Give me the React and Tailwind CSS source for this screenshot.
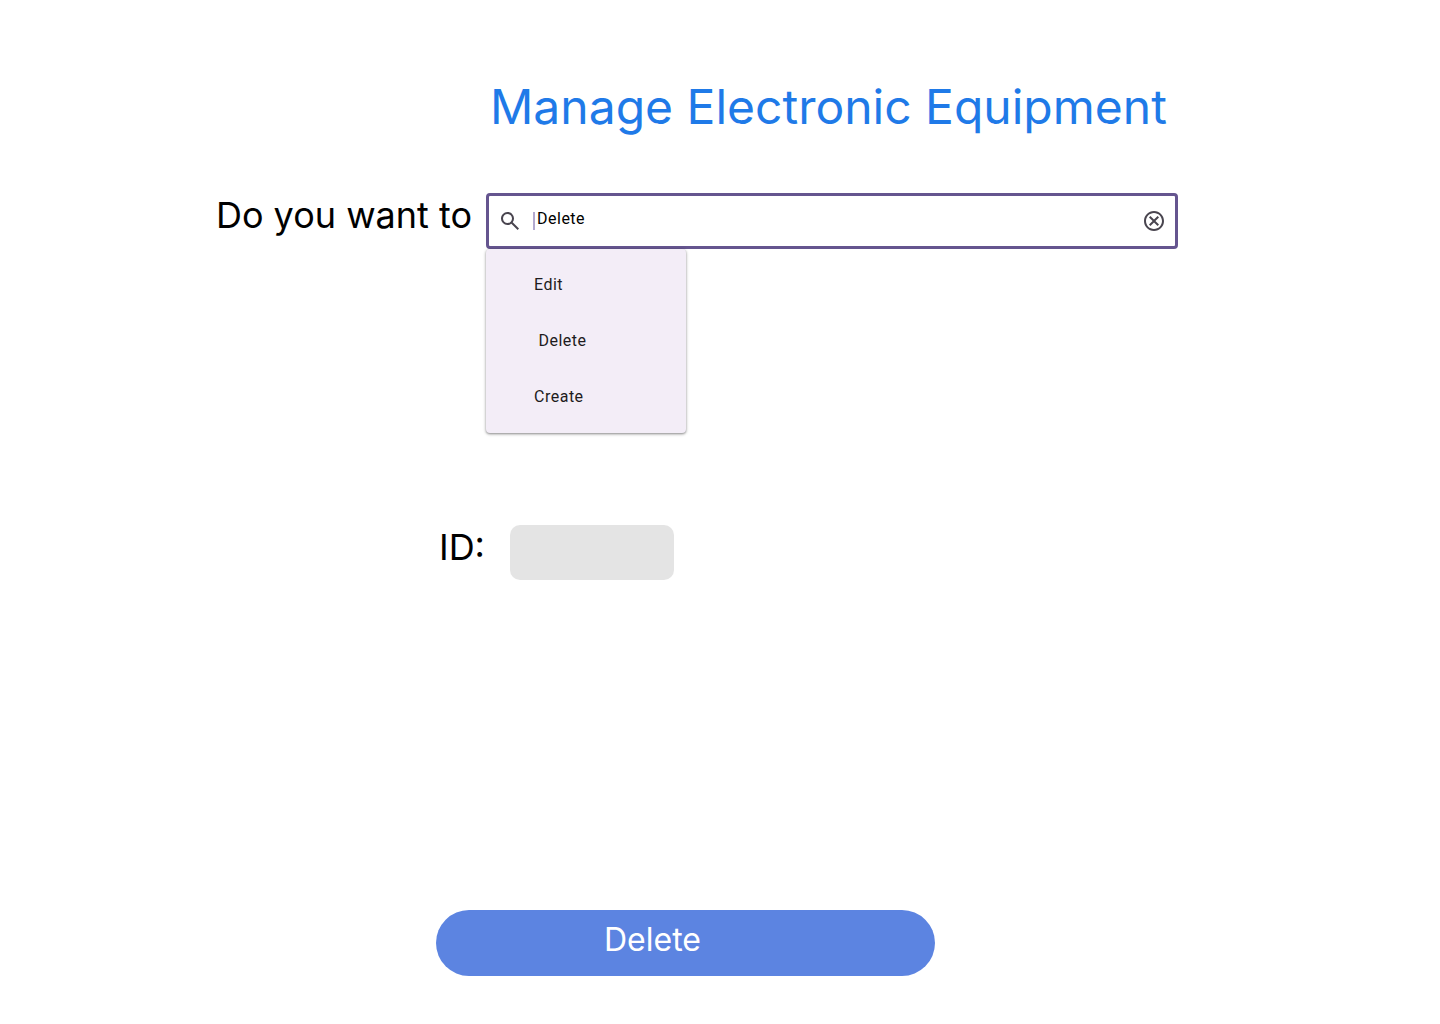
import React from "react";

const options = ["Edit", " Delete", "Create"];

export default function App() {
  return (
    <main className="min-h-screen bg-white pt-[78px] font-['Inter',sans-serif] text-black">
      <h1 className="pl-[490px] text-[48px] leading-[58px] text-[#1f7ae8]">Manage Electronic Equipment</h1>
      <form>
        <div className="mt-[57px] flex pr-[262px]">
          <label htmlFor="action" className="w-[486px] shrink-0 pr-[14px] text-right text-4xl leading-[44px] whitespace-nowrap">
            Do you want to
          </label>
          <div className="min-w-0 flex-1">
            <div className="flex h-[56px] items-center rounded-[4px] border-[3px] border-[#65558f] px-[9px]">
              <svg viewBox="0 0 24 24" className="size-6 shrink-0 fill-[#49454f]" aria-hidden="true">
                <path d="M19.6 21l-6.3-6.3A6.1 6.1 0 0 1 9.5 16a6.27 6.27 0 0 1-4.613-1.888A6.27 6.27 0 0 1 3 9.5c0-1.817.63-3.354 1.887-4.613A6.27 6.27 0 0 1 9.5 3c1.817 0 3.354.63 4.613 1.887A6.27 6.27 0 0 1 16 9.5a6.1 6.1 0 0 1-1.3 3.8l6.3 6.3-1.4 1.4zM9.5 14c1.25 0 2.313-.438 3.188-1.312C13.562 11.813 14 10.75 14 9.5s-.438-2.312-1.312-3.187C11.813 5.438 10.75 5 9.5 5s-2.312.438-3.187 1.313S5 8.25 5 9.5s.438 2.313 1.313 3.188C7.188 13.562 8.25 14 9.5 14z" />
              </svg>
              <span className="ml-[11px] h-[18px] w-[2px] bg-[#b3a9cf]" />
              <input id="action" defaultValue="Delete" className="ml-[2px] min-w-0 flex-1 pb-1 font-['Roboto',sans-serif] text-base leading-6 tracking-[0.5px] outline-none" />
              <button type="button" aria-label="Clear" className="size-6 shrink-0">
                <svg viewBox="0 0 24 24" className="size-6 fill-[#49454f]" aria-hidden="true">
                  <path d="M8.4 17l3.6-3.6 3.6 3.6 1.4-1.4-3.6-3.6L17 8.4 15.6 7 12 10.6 8.4 7 7 8.4l3.6 3.6L7 15.6 8.4 17zM12 2C6.47 2 2 6.47 2 12s4.47 10 10 10 10-4.47 10-10S17.53 2 12 2zm0 18c-4.41 0-8-3.59-8-8s3.59-8 8-8 8 3.59 8 8-3.59 8-8 8z" />
                </svg>
              </button>
            </div>
            <ul className="w-[200px] rounded-[4px] bg-[#f3edf7] py-2 shadow-[0_1px_2px_rgba(0,0,0,0.3),0_1px_3px_1px_rgba(0,0,0,0.15)]">
              {options.map((option) => (
                <li key={option}>
                  <button type="button" className="h-14 w-full pl-12 text-left font-['Roboto',sans-serif] text-base leading-6 tracking-[0.5px] whitespace-pre text-[#1d1b20]">
                    {option}
                  </button>
                </li>
              ))}
            </ul>
          </div>
        </div>
        <div className="mt-[92px] flex">
          <label htmlFor="equipment-id" className="w-[510px] pr-[25px] text-right text-4xl leading-[44px]">ID:</label>
          <input id="equipment-id" className="h-[55px] w-[164px] rounded-[10px] bg-[#e4e4e4] px-3 text-2xl" />
        </div>
        <div className="mt-[330px] pr-[505px] pl-[436px]">
          <button type="submit" className="h-[66px] w-full rounded-full bg-[#5c84e1] pr-[66px] pb-[6px] text-[32px] leading-10 text-white">Delete</button>
        </div>
      </form>
    </main>
  );
}
